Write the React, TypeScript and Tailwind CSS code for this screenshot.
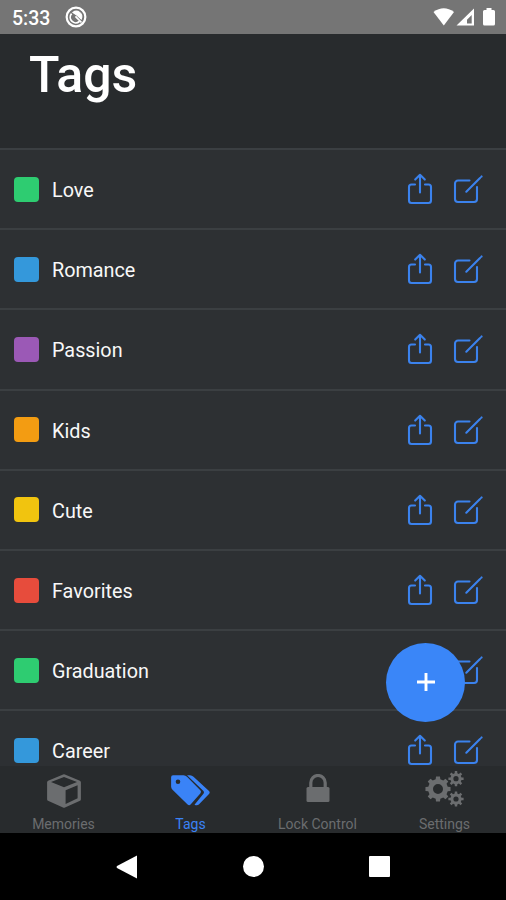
import type { ReactNode } from "react";

type Tag = { name: string; color: string };

const tags: Tag[] = [
  { name: "Love", color: "bg-[#2ecc71]" },
  { name: "Romance", color: "bg-[#3498db]" },
  { name: "Passion", color: "bg-[#9b59b6]" },
  { name: "Kids", color: "bg-[#f39c12]" },
  { name: "Cute", color: "bg-[#f1c40f]" },
  { name: "Favorites", color: "bg-[#e74c3c]" },
  { name: "Graduation", color: "bg-[#2ecc71]" },
  { name: "Career", color: "bg-[#3498db]" },
];

// Outline of a cog wheel with evenly spaced, slightly tapered teeth and a round hole
function gear(cx: number, cy: number, outer: number, inner: number, hole: number, teeth: number) {
  const step = (Math.PI * 2) / teeth;
  const points: string[] = [];
  for (let i = 0; i < teeth; i++) {
    const mid = i * step - Math.PI / 2;
    const corners = [
      [-0.3, inner],
      [-0.2, outer],
      [0.2, outer],
      [0.3, inner],
    ];
    for (const [offset, r] of corners) {
      const a = mid + offset * step;
      points.push(`${(cx + Math.cos(a) * r).toFixed(2)} ${(cy + Math.sin(a) * r).toFixed(2)}`);
    }
  }
  return `M${points.join("L")}ZM${cx - hole} ${cy}a${hole} ${hole} 0 1 0 ${hole * 2} 0a${hole} ${hole} 0 1 0 ${-hole * 2} 0Z`;
}

function ShareIcon() {
  return (
    <svg className="h-8 w-7" viewBox="0 0 28 32" fill="none" stroke="currentColor" strokeWidth="2.1" strokeLinecap="round" strokeLinejoin="round">
      <path d="M9 11.500H5.500A2.500 2.500 0 0 0 3 14v13.500A2.500 2.500 0 0 0 5.500 30h17a2.500 2.500 0 0 0 2.500-2.500V14a2.500 2.500 0 0 0-2.500-2.500H19" />
      <path d="M14 19.500V1.800M9.200 6.600L14 1.800l4.800 4.800" />
    </svg>
  );
}

function EditIcon() {
  return (
    <svg className="h-8 w-8" viewBox="0 0 32 32" fill="none" stroke="currentColor" strokeWidth="2.1" strokeLinecap="round" strokeLinejoin="round">
      <path d="M17.500 7.500H6a3 3 0 0 0-3 3v15.500a3 3 0 0 0 3 3h16a3 3 0 0 0 3-3V14" />
      <path d="M14.300 18.700L28 5M29.300 3.700l.3-.3" />
    </svg>
  );
}

function CubeIcon() {
  return (
    <svg className="h-[34px] w-[34px]" viewBox="0 0 34 34" fill="currentColor" fillRule="evenodd">
      <path d="M17 .3a2 2 0 0 1 .9.2l15 6.200q1 .5 1 1.600v16.900q0 1-.9 1.500l-15 6.900q-1 .5-2 0L1 26.700q-.9-.5-.9-1.500V8.300q0-1.100 1-1.600L16.100.5a2 2 0 0 1 .9-.2ZM17 3L4 8.100l13 5.200 13-5.200ZM18.600 16.200v13.700l12-5.700V11.200Z" />
    </svg>
  );
}

function TagsIcon() {
  return (
    <svg className="h-[31px] w-[39px]" viewBox="0 0 39 31" fill="currentColor" fillRule="evenodd">
      <path d="M2 .3h10.500q2 0 3.500 1.500L29.300 15.300q1.500 1.600 0 3.200L19.800 29.300q-1.600 1.700-3.200.1L1.500 14.800Q.1 13.400.1 11.400V2.200Q.1.300 2 .3ZM7 4.400a2.300 2.300 0 1 0 0 4.600a2.300 2.300 0 1 0 0-4.600Z" />
      <path d="M16 .3h3q2 0 3.500 1.500L38 16.100q1.400 1.400 0 2.800L27.800 29.500q-1.600 1.500-4.300.3l8.700-10.700q1.500-1.700 0-3.300Z" />
    </svg>
  );
}

function LockIcon() {
  return (
    <svg className="mb-1.5 h-7 w-6" viewBox="0 0 24 28" fill="none" stroke="currentColor">
      <path d="M4.800 14V8.700a7.200 7.200 0 0 1 14.400 0V14" strokeWidth="3.200" />
      <rect x="0.5" y="13" width="23" height="15" rx="1.5" fill="currentColor" stroke="none" />
    </svg>
  );
}

function CogsIcon() {
  return (
    <svg className="mb-1 h-9 w-[39px]" viewBox="0 0 39 36" fill="currentColor" fillRule="evenodd">
      <path d={gear(13, 18, 12.7, 10, 5, 8)} />
      <path d={gear(31, 7.7, 7.7, 5.6, 2.6, 8)} />
      <path d={gear(31, 28, 7.7, 5.6, 2.6, 8)} />
    </svg>
  );
}

function StatusBar() {
  return (
    <div className="flex h-[34px] shrink-0 items-center bg-[#757575] pr-2.5 pl-3 text-white">
      <span className="w-[53px] pt-1 text-[19.500px] leading-6 font-medium">5:33</span>
      <svg className="h-[22px] w-[22px]" viewBox="0 0 20 20" fill="none" stroke="currentColor">
        <circle cx="10" cy="10" r="8.5" strokeWidth="2" />
        <path d="M7.200 5.800a5 5 0 0 1 7.600 6L11 8.500Z" fill="currentColor" strokeWidth="1" />
        <path d="M6 7a5 5 0 0 0 7 7.100M9.500 9.500l5.500 5.500" strokeWidth="1.600" />
      </svg>
      <svg className="ml-auto h-5 w-[63px]" viewBox="0 0 63 20" fill="currentColor">
        <path d="M.5 5Q10.700-2.500 21 5L10.800 18.500Z" />
        <path fillRule="evenodd" d="M41 1.500V18.500H23.500ZM38.700 8L34 12.700V16.500H38.700Z" />
        <path d="M53.500 1h5v2h2q1.500 0 1.500 1.500v12.500q0 1.500-1.500 1.500h-9q-1.500 0-1.500-1.500V4.500Q50 3 51.500 3h2Z" />
      </svg>
    </div>
  );
}

function TagRow({ tag }: { tag: Tag }) {
  return (
    <li className="flex h-[80.2px] shrink-0 items-center border-t-2 border-[#3b3f42] pr-[22px] pl-3.5">
      <span className={`h-[25px] w-[25px] rounded-[4px] ${tag.color}`} />
      <span className="ml-[13px] pt-1 text-[19.800px] leading-6 text-[#f8f8f8]">{tag.name}</span>
      <div className="ml-auto flex gap-[18px] text-[#3b82ed]">
        <button aria-label={`Share ${tag.name}`}>
          <ShareIcon />
        </button>
        <button aria-label={`Edit ${tag.name}`}>
          <EditIcon />
        </button>
      </div>
    </li>
  );
}

function TabItem({ label, icon, active = false }: { label: string; icon: ReactNode; active?: boolean }) {
  return (
    <button className={`flex w-[127px] shrink-0 flex-col items-center ${active ? "text-[#3a83f7]" : "text-[#6b6d6f]"}`}>
      <span className="flex h-[49px] items-center">{icon}</span>
      <span className="text-[14px] leading-[18px]">{label}</span>
    </button>
  );
}

export default function App() {
  return (
    <div className="relative flex h-[900px] w-[506px] flex-col overflow-hidden bg-[#2d3033] font-[Roboto,sans-serif]">
      <StatusBar />
      <header className="h-[114px] shrink-0 bg-[#282b2d] pt-3 pl-[29px]">
        <h1 className="text-[50px] leading-[58px] font-medium text-white">Tags</h1>
      </header>
      <ul className="flex min-h-0 flex-1 flex-col overflow-hidden">
        {tags.map((tag) => (
          <TagRow key={tag.name} tag={tag} />
        ))}
      </ul>

      <button
        aria-label="Add tag"
        className="absolute top-[643px] left-[386px] flex h-[79px] w-[79px] items-center justify-center rounded-full bg-[#3a86f8] text-white"
      >
        <svg className="mb-px h-[18px] w-[18px]" viewBox="0 0 18 18" stroke="currentColor" strokeWidth="2.9">
          <path d="M9 0v18M0 9h18" />
        </svg>
      </button>

      <nav className="flex h-[67px] shrink-0 overflow-hidden bg-[#282b2d]">
        <TabItem label="Memories" icon={<CubeIcon />} />
        <TabItem label="Tags" icon={<TagsIcon />} active />
        <TabItem label="Lock Control" icon={<LockIcon />} />
        <TabItem label="Settings" icon={<CogsIcon />} />
      </nav>

      {/* Android navigation buttons */}
      <div className="flex h-[67px] shrink-0 items-center justify-center gap-[105px] bg-black text-white">
        <svg className="h-6 w-[22px]" viewBox="0 0 22 24" fill="currentColor">
          <path d="M21 .5v23L1 13q-1-1 0-2Z" />
        </svg>
        <span className="h-[21px] w-[21px] rounded-full bg-white" />
        <span className="h-[21px] w-[21px] rounded-[1px] bg-white" />
      </div>
    </div>
  );
}
